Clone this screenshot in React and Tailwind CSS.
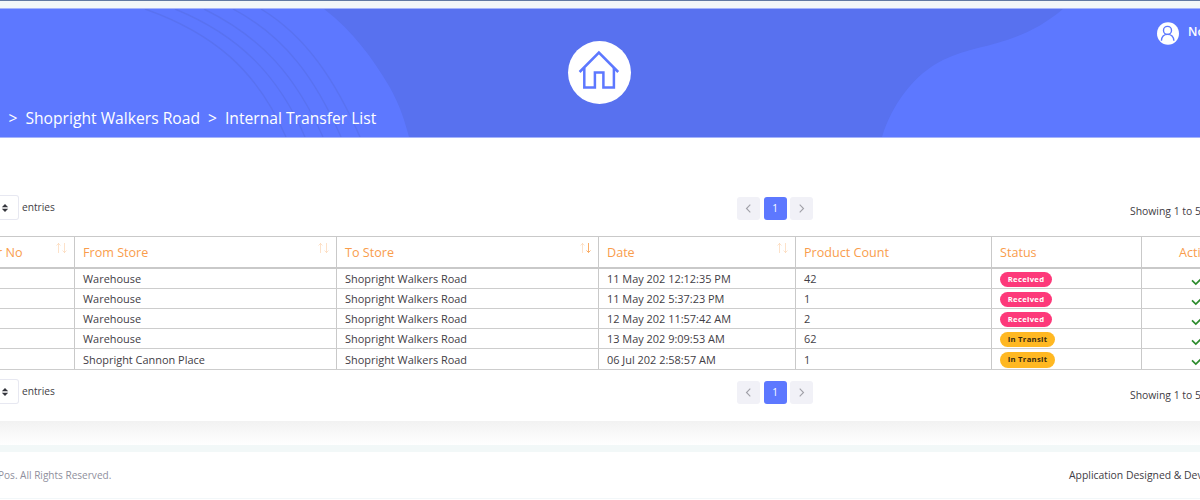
const rows = [
  { from: 'Warehouse', date: '11 May 202 12:12:35 PM', count: '42', status: 'Received', h: 'h-[20px]' },
  { from: 'Warehouse', date: '11 May 202 5:37:23 PM', count: '1', status: 'Received', h: 'h-[20px]' },
  { from: 'Warehouse', date: '12 May 202 11:57:42 AM', count: '2', status: 'Received', h: 'h-[20px]' },
  { from: 'Warehouse', date: '13 May 202 9:09:53 AM', count: '62', status: 'In Transit', h: 'h-[20px]' },
  { from: 'Shopright Cannon Place', date: '06 Jul 202 2:58:57 AM', count: '1', status: 'In Transit', h: 'h-[21px]' },
];

const columns = 'grid grid-cols-[75px_262px_262px_197px_196px_150px_58px]';
const cell = 'flex items-center border-r border-[#c9c9c9] pl-2';

function SortArrows({ active }) {
  return (
    <svg className="mr-[6px] mb-[8px] ml-auto shrink-0" width="13" height="12" viewBox="0 0 13 12" fill="none" stroke="#f9a04f">
      <path d="M3.5 11V1.5M1.5 3.5L3.5 1.5L5.5 3.5" strokeOpacity="0.3" />
      <path d="M9.5 1V10.5M7.5 8.5L9.5 10.5L11.5 8.5" strokeOpacity={active ? '0.85' : '0.3'} />
    </svg>
  );
}

function Head({ children, sort, active }) {
  return (
    <div className={cell}>
      <span className="pt-[2px] whitespace-nowrap">{children}</span>
      {sort && <SortArrows active={active} />}
    </div>
  );
}

function Chevron({ d }) {
  return (
    <span className="flex h-[23px] w-[23px] items-center justify-center rounded-[3px] bg-[#f1f1f7]">
      <svg width="11" height="11" viewBox="0 0 11 11" fill="none" stroke="#a0a0a8" strokeWidth="1.1">
        <path d={d} />
      </svg>
    </span>
  );
}

function Controls() {
  return (
    <div className="flex h-[26px] text-[10.2px] text-[#3f3d45]">
      <div className="flex h-[25px] w-[19px] items-center rounded-r-[3px] border border-l-0 border-[#e7e8f1] pl-px">
        <svg width="8" height="10" viewBox="0 0 8 10" fill="#34353c">
          <path d="M0.8 4.2L4 1L7.2 4.2ZM0.8 5.8H7.2L4 9Z" />
        </svg>
      </div>
      <span className="ml-[3px] w-[715px] pt-[5px] leading-[14px]">entries</span>
      <div className="flex gap-[3.5px] pt-[2px]">
        <Chevron d="M7.3 1.7L3.5 5.5L7.3 9.3" />
        <span className="flex h-[23px] w-[23px] items-center justify-center rounded-[3px] bg-[#5d78ff] text-[10px] text-white">1</span>
        <Chevron d="M3.7 1.7L7.5 5.5L3.7 9.3" />
      </div>
      <span className="ml-auto w-[70px] pt-[9px] text-[10.4px] leading-[14px] whitespace-nowrap">Showing 1 to 5</span>
    </div>
  );
}

function Badge({ status }) {
  const tone = status === 'Received' ? 'w-[52px] bg-[#fd397a] text-white' : 'w-[55px] bg-[#ffb822] text-[#3b2b10]';
  return <span className={`mt-[2px] flex h-[15.5px] items-center justify-center rounded-full pb-[1.5px] text-[7.7px] font-bold tracking-[0.3px] ${tone}`}>{status}</span>;
}

function Banner() {
  return (
    <header className="relative h-[130px] overflow-hidden border-t border-b border-[#a5b4fb] bg-[#5d78ff] text-white">
      <svg className="absolute inset-0" width="1200" height="128" viewBox="0 9 1200 128" fill="none">
        <path d="M324 9C353 31 373 59 389 86C400 105 405 122 409 137H882C892 105 913 75 943 60C978 43 1018 47 1063 9Z" fill="#5871ef" />
        <g stroke="#5972f1" strokeWidth="1.4">
          <path d="M145 9C213 33 257 70 286 137" />
          <path d="M175 9C241 36 279 77 305 137" />
          <path d="M204 9C263 38 296 77 323 137" />
          <path d="M233 9C286 37 316 80 341 137" />
          <path d="M261 9C307 37 336 82 360 137" />
        </g>
      </svg>
      <div className="relative flex h-full flex-col">
        <div className="flex h-[97px] pt-[32px]">
          <span className="ml-[568px] flex h-[63px] w-[63px] shrink-0 items-center justify-center rounded-full bg-white">
            <svg className="-mt-[5px] -ml-[2px]" width="42" height="40" viewBox="0 0 42 40" fill="none" stroke="#5d78ff" strokeWidth="2.5">
              <path d="M1.6 22L20.9 2.6L40.2 22" />
              <path d="M6.3 18V37.5H16.9V22.4H25.4V37.5H35.9V18" />
            </svg>
          </span>
          <span className="-mt-[19px] ml-[526px] flex h-[23px] w-[22px] shrink-0 items-center">
            <svg width="22" height="23" viewBox="0 0 22 23" fill="none" stroke="#5d78ff" strokeWidth="1.4">
              <ellipse cx="11" cy="11.5" rx="11" ry="11.3" fill="#fff" stroke="none" />
              <circle cx="10.5" cy="8.4" r="4" />
              <path d="M4.4 18.8C4.6 14.6 7.2 12.4 10.6 12.4S16.6 14.6 16.9 18.8" />
            </svg>
          </span>
          <span className="-mt-[18px] ml-[9px] text-[12px] leading-[18px] font-semibold">No</span>
        </div>
        <nav className="flex items-center gap-[8px] pl-[8.5px] text-[15.65px] leading-[24px]">
          <span>&gt;</span>
          <span>Shopright Walkers Road</span>
          <span>&gt;</span>
          <span>Internal Transfer List</span>
        </nav>
      </div>
    </header>
  );
}

export default function App() {
  return (
    <div className="h-[500px] w-[1200px] overflow-hidden bg-white font-['Open_Sans','Noto_Sans',sans-serif]">
      <div className="h-[9px] border-t border-[#6279a2] bg-[#f3f7f9]" />
      <div className="-mt-px">
        <Banner />
      </div>
      <main className="flex h-[283px] flex-col bg-white pt-[57px]">
        <Controls />
        <div className="mt-[15px] w-[1200px] border-t border-[#c9c9c9]">
          <div className={`${columns} h-[32px] border-b-2 border-[#c9c9c9] text-[12.6px] text-[#f99d4c]`}>
            <div className="flex items-center justify-between border-r border-[#c9c9c9]">
              <span className="-ml-[3px] pt-[2px] whitespace-nowrap">r No</span>
              <SortArrows />
            </div>
            <Head sort>From Store</Head>
            <Head sort active>To Store</Head>
            <Head sort>Date</Head>
            <Head>Product Count</Head>
            <Head>Status</Head>
            <div className="flex items-center pt-[2px] pl-[37px]">Acti</div>
          </div>
          {rows.map((r, i) => (
            <div key={i} className={`${columns} ${r.h} border-b border-[#cdcdcd] text-[10.95px] leading-[16px] text-[#3f3d45]`}>
              <div className={cell} />
              <div className={cell}><span className="pt-px">{r.from}</span></div>
              <div className={cell}><span className="pt-px">Shopright Walkers Road</span></div>
              <div className={cell}><span className="pt-px">{r.date}</span></div>
              <div className={cell}><span className="pt-px">{r.count}</span></div>
              <div className={cell}><Badge status={r.status} /></div>
              <div className="flex items-center pl-[49px]">
                <svg className="mt-[6px] shrink-0" width="12" height="8" viewBox="0 0 12 8" fill="none" stroke="#2c8a2c" strokeWidth="1.7">
                  <path d="M1 2.4L4.8 6L10.5 0.6" />
                </svg>
              </div>
            </div>
          ))}
        </div>
        <div className="mt-[9px]">
          <Controls />
        </div>
      </main>
      <div className="h-[24px] bg-gradient-to-b from-[#f2f2f2] to-white" />
      <div className="h-[7px] bg-[#f2f8f8]" />
      <footer className="flex h-[47px] items-center justify-between border-b border-[#f2f7f9] bg-white pt-[2px] text-[10.4px]">
        <span className="-ml-[2px] text-[10.05px] text-[#8f8f9d]">Pos. All Rights Reserved.</span>
        <span className="w-[131px] whitespace-nowrap text-[#3f3d45]">Application Designed &amp; Dev</span>
      </footer>
    </div>
  );
}
